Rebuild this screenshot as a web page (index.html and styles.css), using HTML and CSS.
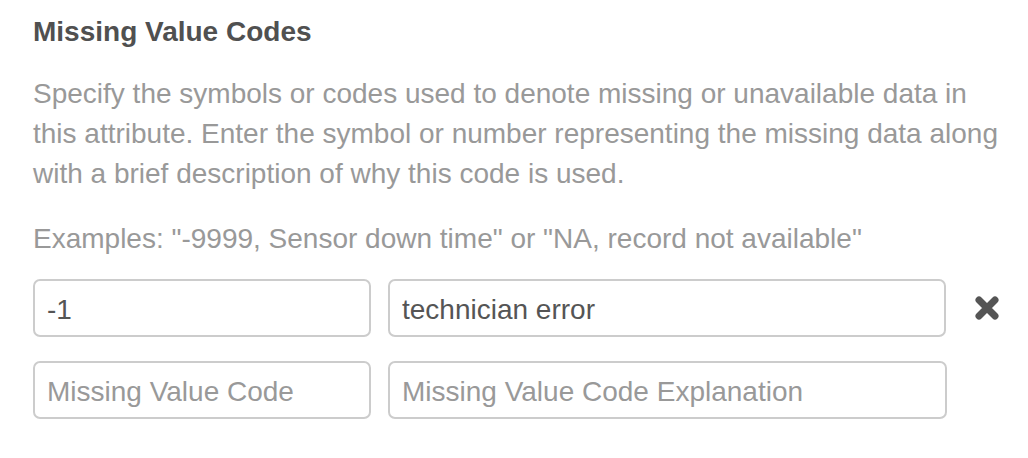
FILE: index.html
```html
<!DOCTYPE html>
<html>
<head>
<meta charset="utf-8">
<link rel="stylesheet" href="styles.css">
</head>
<body>
<div class="section">
  <h4 class="title">Missing Value Codes</h4>
  <p class="desc">Specify the symbols or codes used to denote missing or unavailable data in this attribute. Enter the symbol or number representing the missing data along with a brief description of why this code is used.</p>
  <p class="examples">Examples: "-9999, Sensor down time" or "NA, record not available"</p>
  <div class="rows">
    <div class="row">
      <input class="field code" type="text" value="-1">
      <input class="field expl" type="text" value="technician error">
      <span class="remove" aria-label="remove">
        <svg viewBox="0 0 26 26" width="26" height="26"><path d="M5 5 L21 21 M21 5 L5 21" stroke="#555" stroke-width="7" stroke-linecap="round" fill="none"/></svg>
      </span>
    </div>
    <div class="row">
      <input class="field code" type="text" placeholder="Missing Value Code">
      <input class="field expl" type="text" placeholder="Missing Value Code Explanation">
      <span class="remove-spacer"></span>
    </div>
  </div>
</div>
</body>
</html>
```
FILE: styles.css
```css
html, body {
  margin: 0;
  padding: 0;
  background: #fff;
}
body {
  font-family: "Liberation Sans", Arial, sans-serif;
}
.section {
  padding: 16px 0 0 33px;
  width: 967px;
}
.title {
  margin: 0;
  font-size: 28px;
  line-height: 32px;
  font-weight: bold;
  color: #505050;
}
.desc {
  margin: 26px 0 0;
  font-size: 28px;
  line-height: 40px;
  color: #999;
}
.examples {
  margin: 25px 0 0;
  font-size: 28px;
  line-height: 40px;
  color: #999;
}
.rows {
  margin-top: 20px;
  display: flex;
  flex-direction: column;
  gap: 24px;
}
.row {
  display: flex;
  align-items: center;
  gap: 17px;
}
.field {
  box-sizing: border-box;
  height: 58px;
  border: 2px solid #ccc;
  border-radius: 7px;
  padding: 3px 12px 0;
  font-family: "Liberation Sans", Arial, sans-serif;
  font-size: 28px;
  color: #555;
  background: #fff;
  outline: none;
}
.field::placeholder {
  color: #999;
}
.code { width: 338px; }
.expl { width: 559px; }
.remove {
  margin-left: 11px;
  width: 26px;
  height: 26px;
  display: flex;
}
.remove-spacer { width: 26px; }
```
